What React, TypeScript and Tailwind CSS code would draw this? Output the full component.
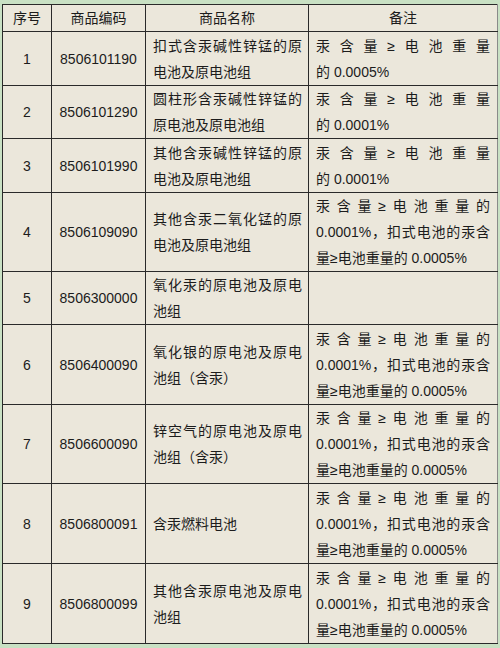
import React from "react";

type Row = {
  no: string;
  code: string;
  name: string[];
  note: string[];
  h: string;
};

const noteShort = (pct: string) => ["汞含量≥电池重量", `的 ${pct}`];
const noteLong = ["汞含量≥电池重量的", "0.0001%，扣式电池的汞含", "量≥电池重量的 0.0005%"];

const rows: Row[] = [
  { no: "1", code: "8506101190", name: ["扣式含汞碱性锌锰的原", "电池及原电池组"], note: noteShort("0.0005%"), h: "h-[54px]" },
  { no: "2", code: "8506101290", name: ["圆柱形含汞碱性锌锰的", "原电池及原电池组"], note: noteShort("0.0001%"), h: "h-[53px]" },
  { no: "3", code: "8506101990", name: ["其他含汞碱性锌锰的原", "电池及原电池组"], note: noteShort("0.0001%"), h: "h-[54px]" },
  { no: "4", code: "8506109090", name: ["其他含汞二氧化锰的原", "电池及原电池组"], note: noteLong, h: "h-[79px]" },
  { no: "5", code: "8506300000", name: ["氧化汞的原电池及原电", "池组"], note: [], h: "h-[53px]" },
  { no: "6", code: "8506400090", name: ["氧化银的原电池及原电", "池组（含汞）"], note: noteLong, h: "h-[80px]" },
  { no: "7", code: "8506600090", name: ["锌空气的原电池及原电", "池组（含汞）"], note: noteLong, h: "h-[79px]" },
  { no: "8", code: "8506800091", name: ["含汞燃料电池"], note: noteLong, h: "h-[80px]" },
  { no: "9", code: "8506800099", name: ["其他含汞原电池及原电", "池组"], note: noteLong, h: "h-[80px]" },
];

// every line but the last one is stretched to the cell width
function Lines({ lines }: { lines: string[] }) {
  return (
    <>
      {lines.map((l, i) => (
        <div
          key={i}
          className={i < lines.length - 1 ? "text-justify [text-align-last:justify]" : "text-left"}
        >
          {l}
        </div>
      ))}
    </>
  );
}

export default function App() {
  const cell = "border border-[#2a2a2a] align-middle p-0";

  return (
    <div
      className="w-[500px] h-[648px] bg-[#c9e1c4] pt-[4px] pl-[2px] text-[14px] leading-[26px] text-[#1c1c1c]"
      style={{ fontFamily: '"Liberation Sans", "Noto Sans CJK SC", sans-serif' }}
    >
      <table className="border-collapse bg-[#ebe7db] table-fixed w-[495px]">
        <colgroup>
          <col className="w-[49px]" />
          <col className="w-[94px]" />
          <col className="w-[163px]" />
          <col className="w-[189px]" />
        </colgroup>
        <thead>
          <tr className="h-[27px]">
            <th className={`${cell} font-normal text-center`}>序号</th>
            <th className={`${cell} font-normal text-center`}>商品编码</th>
            <th className={`${cell} font-normal text-center`}>商品名称</th>
            <th className={`${cell} font-normal text-center border-r-[#8a8a8a]`}>备注</th>
          </tr>
        </thead>
        <tbody>
          {rows.map((r) => (
            <tr key={r.no} className={r.h}>
              <td className={`${cell} text-center`}>{r.no}</td>
              <td className={`${cell} text-center`}>{r.code}</td>
              <td className={`${cell} pl-[7px] pr-[6px]`}>
                <Lines lines={r.name} />
              </td>
              <td className={`${cell} pl-[7px] pr-[7px] border-r-[#8a8a8a]`}>
                <Lines lines={r.note} />
              </td>
            </tr>
          ))}
        </tbody>
      </table>
    </div>
  );
}
